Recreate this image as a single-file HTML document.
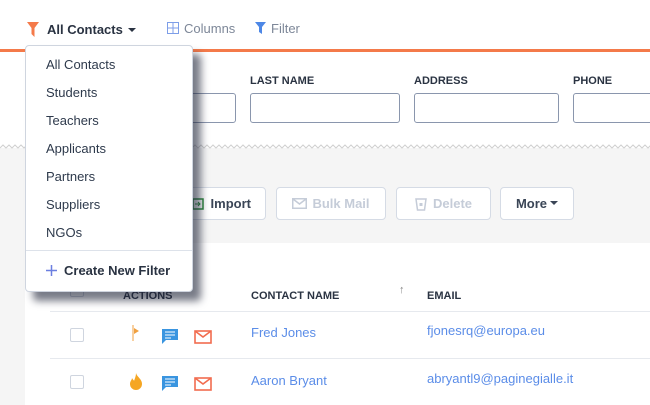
<!DOCTYPE html>
<html><head><style>
*{margin:0;padding:0;box-sizing:border-box}
body{width:650px;height:405px;overflow:hidden;background:#f5f5f5;font-family:"Liberation Sans",sans-serif;position:relative;color:#2a3342}
.a{position:absolute}
.top{left:0;top:0;width:650px;height:49px;background:#fff}
.ol{left:0;top:49px;width:650px;height:3px;background:#f47a4a}
.fa{left:0;top:52px;width:650px;height:96px;background:#fff}
.lbl{font-size:11px;font-weight:bold;color:#2a3342;top:75px}
.inp{top:93px;height:30px;border:1px solid #8a96ad;border-radius:3px;background:#fff}
.btn{top:187px;height:33px;border:1px solid #d5dbe5;border-radius:4px;background:#fff;font-size:13px;font-weight:bold;display:flex;align-items:center;justify-content:center}
.tbl{left:25px;top:243px;width:625px;height:162px;background:#fff}
.dd{left:25px;top:45px;width:168px;height:247px;background:#fff;border:1px solid #cfd5df;border-radius:4px;box-shadow:8px 9px 8px rgba(30,35,55,.6)}
.it{position:absolute;left:20px;font-size:13px;color:#2e3a4c}
.cb{width:14px;height:14px;border:1px solid #cfd5df;border-radius:2px;background:#fff}
.lnk{color:#5b8de8;font-size:13px}
.hl{height:1px;background:#e6e9ee}
</style></head><body>
<div class="a top"></div>
<div class="a ol"></div>
<div class="a fa"></div>
<svg class="a" style="left:0;top:144px" width="650" height="6">
<polyline fill="none" stroke="#d0d0d0" stroke-width="1" points="0,4 3,1 6,4 9,1 12,4 15,1 18,4 21,1 24,4 27,1 30,4 33,1 36,4 39,1 42,4 45,1 48,4 51,1 54,4 57,1 60,4 63,1 66,4 69,1 72,4 75,1 78,4 81,1 84,4 87,1 90,4 93,1 96,4 99,1 102,4 105,1 108,4 111,1 114,4 117,1 120,4 123,1 126,4 129,1 132,4 135,1 138,4 141,1 144,4 147,1 150,4 153,1 156,4 159,1 162,4 165,1 168,4 171,1 174,4 177,1 180,4 183,1 186,4 189,1 192,4 195,1 198,4 201,1 204,4 207,1 210,4 213,1 216,4 219,1 222,4 225,1 228,4 231,1 234,4 237,1 240,4 243,1 246,4 249,1 252,4 255,1 258,4 261,1 264,4 267,1 270,4 273,1 276,4 279,1 282,4 285,1 288,4 291,1 294,4 297,1 300,4 303,1 306,4 309,1 312,4 315,1 318,4 321,1 324,4 327,1 330,4 333,1 336,4 339,1 342,4 345,1 348,4 351,1 354,4 357,1 360,4 363,1 366,4 369,1 372,4 375,1 378,4 381,1 384,4 387,1 390,4 393,1 396,4 399,1 402,4 405,1 408,4 411,1 414,4 417,1 420,4 423,1 426,4 429,1 432,4 435,1 438,4 441,1 444,4 447,1 450,4 453,1 456,4 459,1 462,4 465,1 468,4 471,1 474,4 477,1 480,4 483,1 486,4 489,1 492,4 495,1 498,4 501,1 504,4 507,1 510,4 513,1 516,4 519,1 522,4 525,1 528,4 531,1 534,4 537,1 540,4 543,1 546,4 549,1 552,4 555,1 558,4 561,1 564,4 567,1 570,4 573,1 576,4 579,1 582,4 585,1 588,4 591,1 594,4 597,1 600,4 603,1 606,4 609,1 612,4 615,1 618,4 621,1 624,4 627,1 630,4 633,1 636,4 639,1 642,4 645,1 648,4 651,1"/></svg>

<svg class="a" style="left:27px;top:22px" width="12" height="15"><path d="M0 0h12l-4.5 6v9l-3-3v-6z" fill="#f47a4a"/></svg>
<div class="a" style="left:47px;top:22px;font-size:13px;font-weight:bold;color:#2a3342">All Contacts</div>
<svg class="a" style="left:128px;top:28px" width="8" height="5"><path d="M0 0h8l-4 4z" fill="#2a3342"/></svg>
<svg class="a" style="left:167px;top:22px" width="12" height="12"><rect x=".5" y=".5" width="11" height="11" fill="none" stroke="#7d9ee8"/><path d="M6 0v12M0 6h12" stroke="#7d9ee8"/></svg>
<div class="a" style="left:184px;top:21px;font-size:13px;color:#7d8798">Columns</div>
<svg class="a" style="left:255px;top:22px" width="11" height="12"><path d="M0 0h11l-4 5v7l-3-2v-5z" fill="#4d87e6"/></svg>
<div class="a" style="left:271px;top:21px;font-size:13px;color:#7d8798">Filter</div>

<div class="a inp" style="left:150px;width:86px"></div>
<div class="a lbl" style="left:250px">LAST NAME</div>
<div class="a inp" style="left:250px;width:150px"></div>
<div class="a lbl" style="left:414px">ADDRESS</div>
<div class="a inp" style="left:414px;width:145px"></div>
<div class="a lbl" style="left:573px">PHONE</div>
<div class="a inp" style="left:573px;width:90px"></div>

<div class="a btn" style="left:150px;width:116px;color:#3a4556;justify-content:flex-end;padding-right:14px"><svg width="12" height="12" style="margin-right:7px"><rect x="1" y="1" width="10" height="10" fill="none" stroke="#2e8b3e" stroke-width="1.5"/><path d="M3 6h5M6 4l2 2-2 2" stroke="#2e8b3e" fill="none"/></svg>Import</div>
<div class="a btn" style="left:276px;width:110px;color:#c5ccd8"><svg width="15" height="11" style="margin-right:5px"><rect x=".75" y=".75" width="13.5" height="9.5" fill="none" stroke="#c5ccd8" stroke-width="1.5"/><path d="M1 1l6.5 5 6.5-5" fill="none" stroke="#c5ccd8" stroke-width="1.5"/></svg>Bulk Mail</div>
<div class="a btn" style="left:396px;width:95px;color:#c5ccd8"><svg width="12" height="14" style="margin-right:6px"><path d="M1 2h10l-1.5 11h-7z" fill="none" stroke="#c5ccd8" stroke-width="1.5"/><rect x="4.5" y="6" width="3" height="3" fill="#c5ccd8"/></svg>Delete</div>
<div class="a btn" style="left:500px;width:74px;color:#3a4556">More<svg width="8" height="5" style="margin-left:3px"><path d="M0 0h8l-4 4z" fill="#3a4556"/></svg></div>

<div class="a tbl"></div>
<div class="a cb" style="left:70px;top:283px"></div>
<div class="a" style="left:123px;top:290px;font-size:11px;font-weight:bold">ACTIONS</div>
<div class="a" style="left:251px;top:290px;font-size:11px;font-weight:bold">CONTACT NAME</div>
<div class="a" style="left:399px;top:284px;font-size:11px;color:#888">↑</div>
<div class="a" style="left:427px;top:290px;font-size:11px;font-weight:bold">EMAIL</div>
<div class="a hl" style="left:50px;top:311px;width:600px"></div>
<div class="a hl" style="left:50px;top:358px;width:600px"></div>

<div class="a cb" style="left:70px;top:328px"></div>
<svg class="a" style="left:132px;top:325px" width="8" height="16"><path d="M1 0v16" stroke="#f0a040"/><path d="M2 3l5 3-5 3z" fill="#f0a040"/></svg>
<svg class="a" style="left:161px;top:328px" width="18" height="17"><path d="M1 1h16v11H5l-4 4z" fill="#3a95e0"/><path d="M4 4h10M4 7h10M4 10h6" stroke="#fff"/></svg>
<svg class="a" style="left:194px;top:330px" width="18" height="14"><rect x="1" y="1" width="16" height="12" fill="none" stroke="#f26c4f" stroke-width="1.6"/><path d="M1 1l8 6 8-6" fill="none" stroke="#f26c4f" stroke-width="1.6"/></svg>
<div class="a lnk" style="left:251px;top:325px">Fred Jones</div>
<div class="a lnk" style="left:427px;top:323px">fjonesrq@europa.eu</div>

<div class="a cb" style="left:70px;top:375px"></div>
<svg class="a" style="left:129px;top:373px" width="14" height="17"><path d="M7 0c1 4 6 6 6 11a6 6 0 0 1-12 0c0-3 2-4 2-6 1 2 2 2 2 3 1-3 2-5 2-8z" fill="#f5a623"/></svg>
<svg class="a" style="left:161px;top:375px" width="18" height="17"><path d="M1 1h16v11H5l-4 4z" fill="#3a95e0"/><path d="M4 4h10M4 7h10M4 10h6" stroke="#fff"/></svg>
<svg class="a" style="left:194px;top:377px" width="18" height="14"><rect x="1" y="1" width="16" height="12" fill="none" stroke="#f26c4f" stroke-width="1.6"/><path d="M1 1l8 6 8-6" fill="none" stroke="#f26c4f" stroke-width="1.6"/></svg>
<div class="a lnk" style="left:251px;top:373px">Aaron Bryant</div>
<div class="a lnk" style="left:427px;top:371px">abryantl9@paginegialle.it</div>

<div class="a dd">
<div class="it" style="top:11px">All Contacts</div>
<div class="it" style="top:39px">Students</div>
<div class="it" style="top:67px">Teachers</div>
<div class="it" style="top:95px">Applicants</div>
<div class="it" style="top:123px">Partners</div>
<div class="it" style="top:151px">Suppliers</div>
<div class="it" style="top:179px">NGOs</div>
<div style="position:absolute;left:0;top:204px;width:166px;height:1px;background:#dde2ea"></div>
<svg style="position:absolute;left:20px;top:219px" width="11" height="11"><path d="M5.5 0v11M0 5.5h11" stroke="#6b7fe0" stroke-width="1.5"/></svg>
<div class="it" style="left:38px;top:217px;font-weight:bold;color:#2a3342">Create New Filter</div>
</div>
</body></html>
